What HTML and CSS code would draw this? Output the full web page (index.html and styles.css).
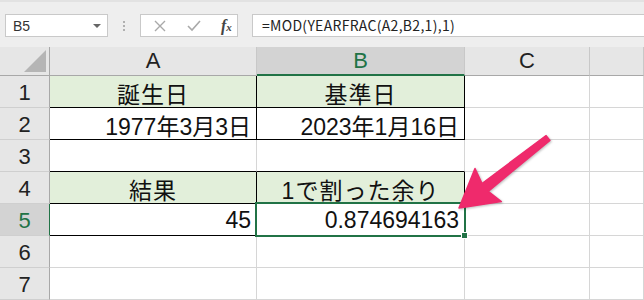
FILE: index.html
```html
<!DOCTYPE html>
<html lang="ja">
<head>
    <meta charset="UTF-8">
    <meta name="viewport" content="width=device-width, initial-scale=1.0">
    <link rel="stylesheet" href="styles.css">
</head>
<body>

    <div class="toolbar">
        <div class="namebox">
            <span>B5</span>
            <span class="caret"></span>
        </div>
        <div class="grip"><i></i><i></i><i></i></div>
        <div class="fxbox">
            <svg class="ico" width="14" height="14" viewBox="0 0 14 14">
                <path d="M2 2 L12 12 M12 2 L2 12" stroke="#a9a9a9" stroke-width="1.4" fill="none"/>
            </svg>
            <svg class="ico" width="16" height="14" viewBox="0 0 16 14">
                <path d="M2 7 L6 11 L14 2" stroke="#a9a9a9" stroke-width="1.6" fill="none"/>
            </svg>
            <span class="fx">f<sub>x</sub></span>
        </div>
        <div class="formula">=MOD(YEARFRAC(A2,B2,1),1)</div>
    </div>

    <div class="sheet">
        <!-- column headers -->
        <div class="cell hd corner"><span class="tri"></span></div>
        <div class="cell hd">A</div>
        <div class="cell hd hd-sel">B</div>
        <div class="cell hd">C</div>
        <div class="cell hd"></div>

        <!-- row 1 -->
        <div class="cell rn">1</div>
        <div class="cell fill bk-r bk-b center">誕生日</div>
        <div class="cell fill bk-r bk-b center">基準日</div>
        <div class="cell"></div>
        <div class="cell"></div>

        <!-- row 2 -->
        <div class="cell rn">2</div>
        <div class="cell bk-r bk-b right">1977年3月3日</div>
        <div class="cell bk-r bk-b right">2023年1月16日</div>
        <div class="cell"></div>
        <div class="cell"></div>

        <!-- row 3 -->
        <div class="cell rn">3</div>
        <div class="cell bk-b"></div>
        <div class="cell bk-b"></div>
        <div class="cell"></div>
        <div class="cell"></div>

        <!-- row 4 -->
        <div class="cell rn">4</div>
        <div class="cell fill bk-r bk-b center">結果</div>
        <div class="cell fill bk-r bk-b center">1で割った余り</div>
        <div class="cell"></div>
        <div class="cell"></div>

        <!-- row 5 -->
        <div class="cell rn rn-sel">5</div>
        <div class="cell bk-r bk-b right">45</div>
        <div class="cell bk-r bk-b right sel">0.874694163</div>
        <div class="cell"></div>
        <div class="cell"></div>

        <!-- row 6 -->
        <div class="cell rn">6</div>
        <div class="cell"></div>
        <div class="cell"></div>
        <div class="cell"></div>
        <div class="cell"></div>

        <!-- row 7 -->
        <div class="cell rn">7</div>
        <div class="cell"></div>
        <div class="cell"></div>
        <div class="cell"></div>
        <div class="cell"></div>
    </div>

    <!-- annotation arrow -->
    <svg class="arrow" width="644" height="300" viewBox="0 0 644 300">
        <polygon points="459,208 475,168.5 482,183.5 546.1,135.6 549.9,140.4 488.2,191.3 501.3,201.5"
                 fill="#ef2a6c" stroke="#ef2a6c" stroke-width="1.5" stroke-linejoin="round"/>
    </svg>

</body>
</html>
```

FILE: styles.css
```css
body {
    margin: 0;
    position: relative;
    width: 644px;
    height: 300px;
    overflow: hidden;
    background: #fff;
    font-family: "Liberation Sans", "Noto Sans CJK JP", sans-serif;
}

.toolbar {
    height: 47px;
    box-sizing: border-box;
    display: flex;
    align-items: flex-start;
    padding: 12px 0 0 5px;
    background: #eeeeee;
    border-top: 2px solid #e2e2e2;
}

.namebox {
    width: 103px;
    height: 23px;
    box-sizing: border-box;
    display: flex;
    align-items: center;
    justify-content: space-between;
    padding: 0 6px 0 7px;
    background: #fff;
    border: 1px solid #c9c9c9;
    font-size: 14px;
    color: #333;
}

.caret {
    width: 0;
    height: 0;
    border-left: 4px solid transparent;
    border-right: 4px solid transparent;
    border-top: 4px solid #666;
}

.grip {
    width: 32px;
    height: 23px;
    display: flex;
    flex-direction: column;
    align-items: center;
    justify-content: center;
    gap: 2px;
}

.grip i {
    width: 2px;
    height: 2px;
    background: #b0b0b0;
}

.fxbox {
    width: 98px;
    height: 23px;
    box-sizing: border-box;
    display: flex;
    align-items: center;
    padding: 0 0 0 12px;
    background: #fff;
    border: 1px solid #c9c9c9;
}

.ico {
    margin-right: 19px;
}

.fx {
    font-family: "Liberation Serif", serif;
    font-style: italic;
    font-weight: bold;
    font-size: 16px;
    color: #444;
}

.fx sub {
    font-size: 11px;
    vertical-align: 0;
}

.formula {
    flex: 1;
    height: 23px;
    box-sizing: border-box;
    margin-left: 14px;
    padding: 0 0 0 9px;
    background: #fff;
    border: 1px solid #c9c9c9;
    border-right: none;
    font-family: "Noto Sans CJK JP", sans-serif;
    font-size: 14px;
    line-height: 21px;
    color: #222;
    letter-spacing: 0.3px;
}

.sheet {
    display: grid;
    grid-template-columns: 50px 207px 208px 125px 1fr;
    grid-template-rows: 29px repeat(7, 32px);
}

.cell {
    box-sizing: border-box;
    border-right: 1px solid #d6d6d6;
    border-bottom: 1px solid #d6d6d6;
    display: flex;
    align-items: center;
    padding: 2px 5px 0;
    font-size: 23px;
    color: #111;
    white-space: nowrap;
}

.hd {
    background: #e6e6e6;
    justify-content: center;
    padding: 0;
    border-right: 1px solid #c8c8c8;
    border-bottom: 1px solid #a8a8a8;
    font-size: 22px;
    color: #222;
}

.hd-sel {
    background: #d3d3d3;
    color: #217346;
    border-bottom: 2px solid #217346;
}

.corner {
    position: relative;
    border-right: 1px solid #a8a8a8;
}

.tri {
    position: absolute;
    right: 3px;
    bottom: 3px;
    width: 0;
    height: 0;
    border-left: 22px solid transparent;
    border-bottom: 22px solid #b5b5b5;
}

.rn {
    background: #e6e6e6;
    justify-content: center;
    border-right: 1px solid #a8a8a8;
    border-bottom: 1px solid #cfcfcf;
    font-size: 22px;
    color: #222;
}

.rn-sel {
    background: #d3d3d3;
    color: #217346;
    border-right: 1px solid #217346;
}

.fill {
    background: #e2efda;
}

.center {
    justify-content: center;
    letter-spacing: 1px;
}

.right {
    justify-content: flex-end;
}

.bk-r {
    border-right: 1px solid #000;
}

.bk-b {
    border-bottom: 1px solid #000;
}

.sel {
    position: relative;
}

.sel::after {
    content: "";
    position: absolute;
    left: -2px;
    top: -2px;
    right: -2px;
    bottom: -2px;
    border: 2px solid #217346;
}

.sel::before {
    content: "";
    position: absolute;
    right: -4px;
    bottom: -4px;
    width: 5px;
    height: 5px;
    background: #217346;
    border: 1px solid #fff;
    z-index: 1;
}

.arrow {
    position: absolute;
    left: 0;
    top: 0;
    pointer-events: none;
    filter: drop-shadow(1px 1px 1px rgba(0, 0, 0, 0.25));
}
```
